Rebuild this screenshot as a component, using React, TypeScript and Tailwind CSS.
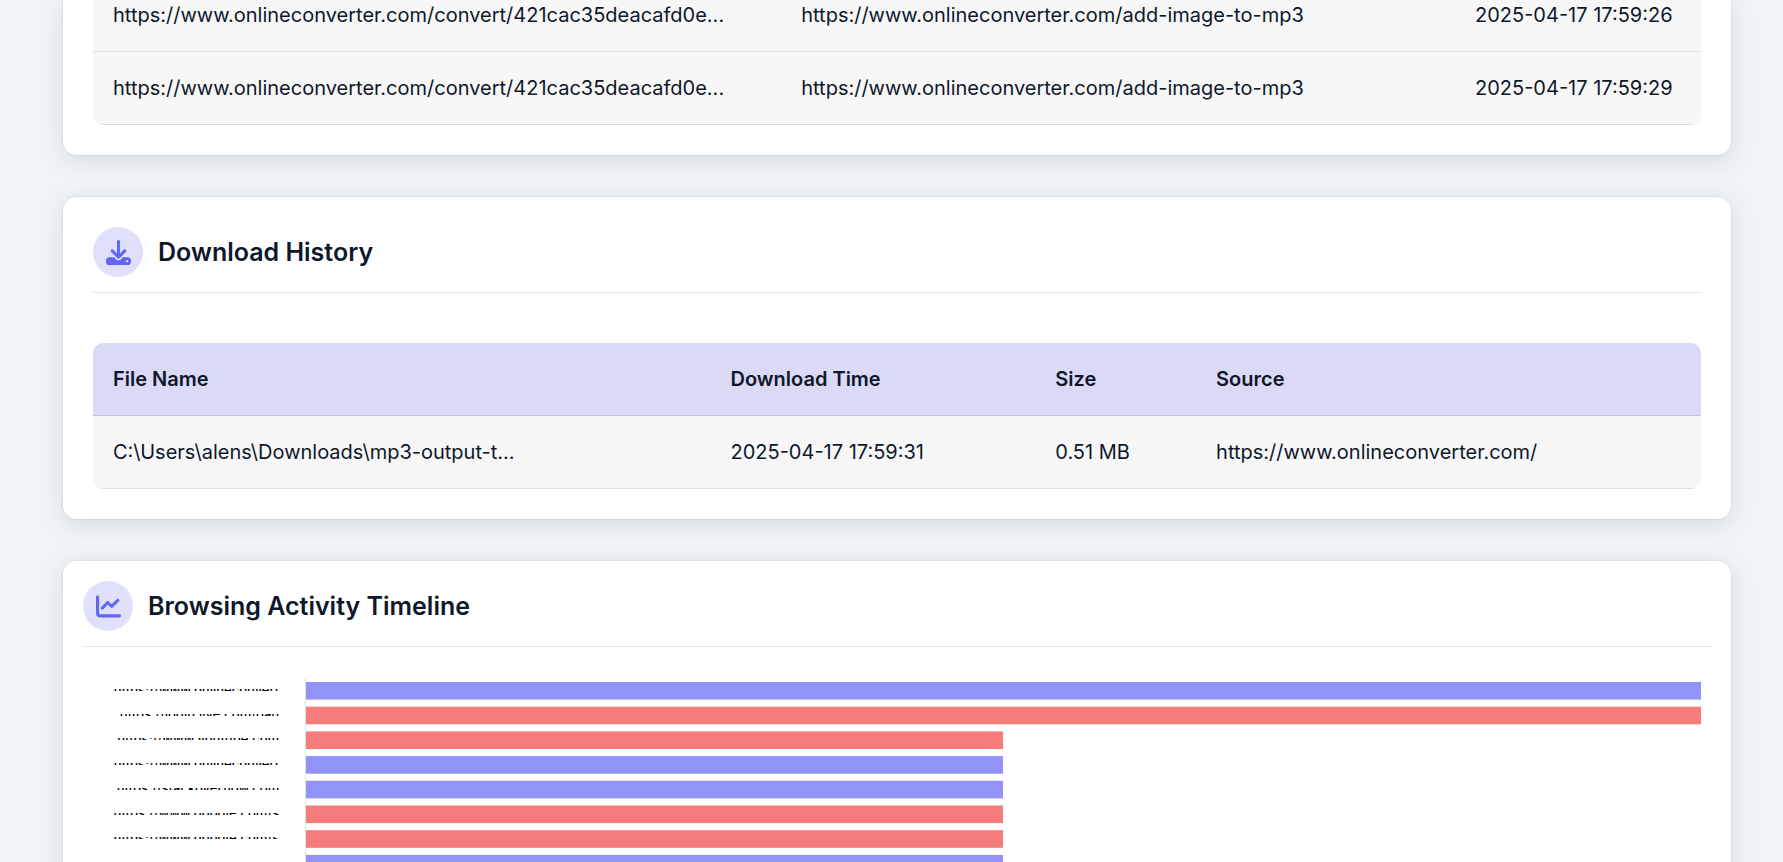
import { FaChartLine, FaDownload } from "react-icons/fa6";
import type { ReactNode } from "react";

const visits = [
  { url: "https://www.onlineconverter.com/convert/421cac35deacafd0e...", referrer: "https://www.onlineconverter.com/add-image-to-mp3", time: "2025-04-17 17:59:26" },
  { url: "https://www.onlineconverter.com/convert/421cac35deacafd0e...", referrer: "https://www.onlineconverter.com/add-image-to-mp3", time: "2025-04-17 17:59:29" },
];

const activity = [
  { label: "https://www.onlineconvert...", value: 2, color: "#9293f7" },
  { label: "https://login.live.com/oau...", value: 2, color: "#f67c7c" },
  { label: "https://www.youtube.com...", value: 1, color: "#f67c7c" },
  { label: "https://www.onlineconvert...", value: 1, color: "#9293f7" },
  { label: "https://stackoverflow.com...", value: 1, color: "#9293f7" },
  { label: "https://www.google.com/s...", value: 1, color: "#f67c7c" },
  { label: "https://www.google.com/s...", value: 1, color: "#f67c7c" },
  { label: "https://www.onlineconvert...", value: 1, color: "#9293f7" },
];
const maxValue = 2;
const pitch = 24.7;

function CardTitle({ icon, children }: { icon: ReactNode; children: ReactNode }) {
  return (
    <div className="flex items-center gap-[15px] border-b border-[#e2e3e5] pb-[15px]">
      <span className="flex size-[50px] items-center justify-center rounded-full bg-[#e0e0fd] text-[25px] text-[#6366f1]">
        {icon}
      </span>
      <h2 className="text-[25px] leading-8 font-semibold">{children}</h2>
    </div>
  );
}

const card = "rounded-[15px] border border-black/5 bg-white bg-clip-padding shadow-[0_5px_25px_rgba(0,0,0,0.1)]";
const td = "border-b border-[#dcdcde] px-5 py-5 leading-8";

export default function App() {
  return (
    <div className="h-screen overflow-hidden bg-[#f0f4f9] font-['Inter',sans-serif] text-xl text-[#0f172a]">
      <header className="sticky top-0 z-10 h-0 shadow-[0_0_6px_rgba(0,0,0,0.12)]" />
      <main className="flex flex-col gap-10 pr-[51px] pl-[62px]">
        <section className={`${card} rounded-t-none border-t-0 px-[30px] pb-[30px]`}>
          <div className="-mt-[21px] overflow-hidden rounded-[10px]">
            <table className="w-full table-fixed border-separate border-spacing-0 bg-[#f7f7f7]">
              <colgroup>
                <col className="w-[42.8%]" />
                <col className="w-[41.9%]" />
                <col />
              </colgroup>
              <tbody>
                {visits.map((v) => (
                  <tr key={v.time}>
                    <td className={td}>{v.url}</td>
                    <td className={td}>{v.referrer}</td>
                    <td className={td}>{v.time}</td>
                  </tr>
                ))}
              </tbody>
            </table>
          </div>
        </section>

        <section className={`${card} p-[30px]`}>
          <CardTitle icon={<FaDownload />}>Download History</CardTitle>
          <div className="mt-[50px] overflow-hidden rounded-[10px]">
            <table className="w-full table-fixed border-separate border-spacing-0 bg-[#f7f7f7] text-left">
              <colgroup>
                <col className="w-[38.4%]" />
                <col className="w-[20.2%]" />
                <col className="w-[10%]" />
                <col />
              </colgroup>
              <thead className="bg-[#dadaf6]">
                <tr>
                  {["File Name", "Download Time", "Size", "Source"].map((h) => (
                    <th key={h} className="border-b border-[#c2c2dc] p-5 leading-8 font-semibold">{h}</th>
                  ))}
                </tr>
              </thead>
              <tbody>
                <tr>
                  <td className={td}>C:\Users\alens\Downloads\mp3-output-t...</td>
                  <td className={td}>2025-04-17 17:59:31</td>
                  <td className={td}>0.51 MB</td>
                  <td className={td}>https://www.onlineconverter.com/</td>
                </tr>
              </tbody>
            </table>
          </div>
        </section>

        <section className={`${card} p-5`}>
          <CardTitle icon={<FaChartLine />}>Browsing Activity Timeline</CardTitle>
          <div className="mt-[31px] flex items-start pr-[10px]">
            <ul className="mt-[11px] flex h-[175px] w-[222px] shrink-0 flex-col items-end justify-between pr-[14px] text-[13px] font-medium text-black">
              {activity.map((a, i) => (
                <li key={i} className="flex h-[2px] items-center overflow-hidden leading-none whitespace-nowrap">
                  {a.label}
                </li>
              ))}
            </ul>
            <svg className="h-[400px] min-w-0 grow" role="img" aria-label="Visits per site">
              {activity.map((a, i) => (
                <rect key={i} x="0" y={4 + i * pitch} width={`${(a.value / maxValue) * 100}%`} height="17.6" fill={a.color} />
              ))}
              <rect width="1" height="400" fill="#e2e3e5" />
            </svg>
          </div>
        </section>
      </main>
    </div>
  );
}
